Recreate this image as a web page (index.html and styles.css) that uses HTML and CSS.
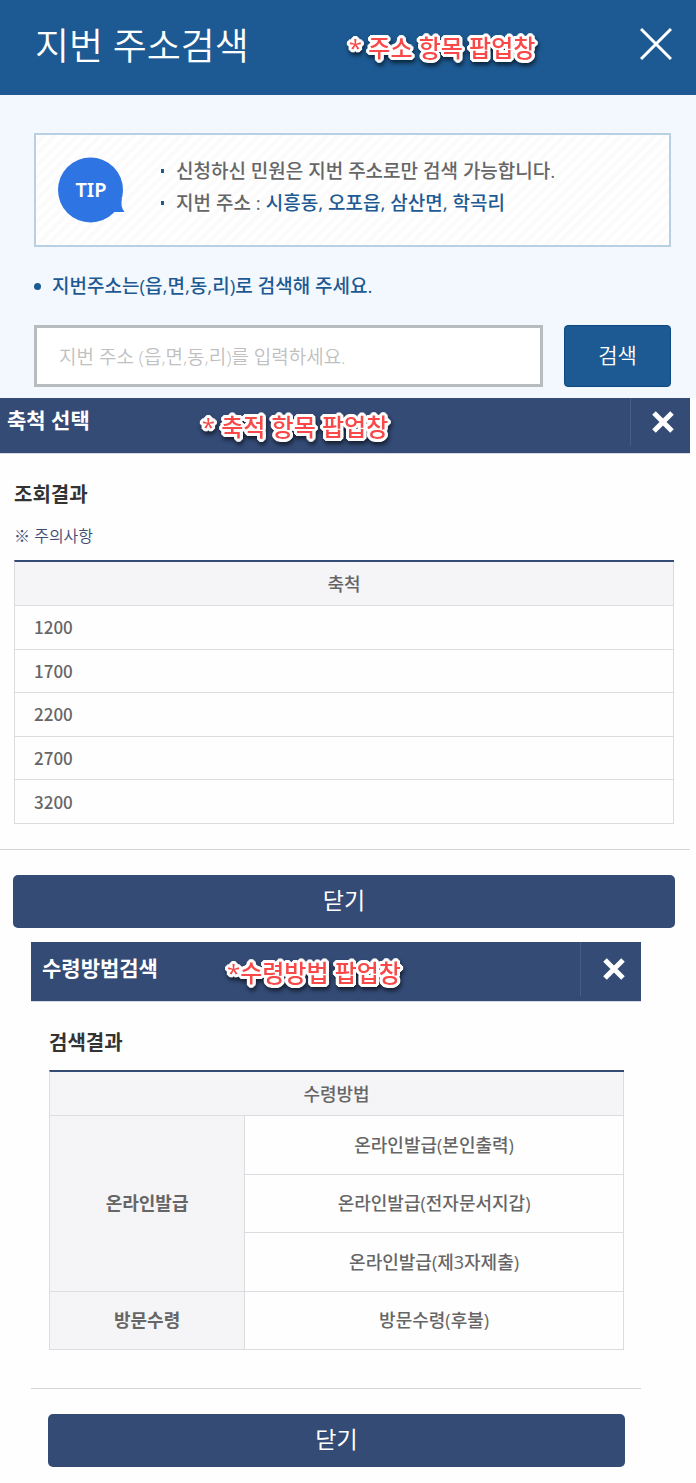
FILE: index.html
```html
<!DOCTYPE html>
<html lang="ko">
<head>
<meta charset="utf-8">
<meta name="viewport" content="width=device-width, initial-scale=1">
<title>지번 주소검색</title>
<link rel="stylesheet" href="styles.css">
</head>
<body>
<section class="address">
  <header class="address-head">
    <h1 class="address-title">지번 주소검색</h1>
    <span class="note">* 주소 항목 팝업창</span>
    <button class="close" type="button" aria-label="주소검색 닫기">
      <svg width="32" height="32" viewBox="0 0 32 32"><path d="M1 1L31 31M31 1L1 31" fill="none" stroke="currentColor" stroke-width="3"/></svg>
    </button>
  </header>
  <div class="address-body">
    <div class="tip">
      <svg class="tip-icon" width="67" height="66" viewBox="0 0 67 66" role="img" aria-label="TIP">
        <path d="M32.500 0.500A32.500 32.500 0 1 1 32.500 65.500A32.500 32.500 0 1 1 32.500 0.500Z" fill="#2f74e3"/>
        <path d="M64 42Q62 49 66.500 55L56 55L50 50Z" fill="#2f74e3"/>
        <text class="tip-label" x="33" y="40" text-anchor="middle">TIP</text>
      </svg>
      <ul class="tip-list">
        <li>신청하신 민원은 지번 주소로만 검색 가능합니다.</li>
        <li>지번 주소 : <b class="tip-strong">시흥동, 오포읍, 삼산면, 학곡리</b></li>
      </ul>
    </div>
    <form class="search">
      <label class="hint" for="addr">지번주소는(읍,면,동,리)로 검색해 주세요.</label>
      <div class="search-row">
        <input class="search-input" id="addr" type="text" placeholder="지번 주소 (읍,면,동,리)를 입력하세요.">
        <button class="search-button" type="button">검색</button>
      </div>
    </form>
  </div>
</section>

<section class="popup popup-scale">
  <header class="popup-head">
    <h2 class="popup-title">축척 선택</h2>
    <span class="note">* 축적 항목 팝업창</span>
    <button class="popup-close" type="button" aria-label="축척 선택 닫기">
      <svg width="24" height="24" viewBox="0 0 24 24"><path d="M3 3L21 21M21 3L3 21" fill="none" stroke="currentColor" stroke-width="5"/></svg>
    </button>
  </header>
  <div class="popup-body">
    <h3 class="result-title">조회결과</h3>
    <p class="caution">※ 주의사항</p>
    <table class="grid">
      <thead><tr><th scope="col">축척</th></tr></thead>
      <tbody class="numbers">
        <tr><td>1200</td></tr>
        <tr><td>1700</td></tr>
        <tr><td>2200</td></tr>
        <tr><td>2700</td></tr>
        <tr><td>3200</td></tr>
      </tbody>
    </table>
  </div>
  <footer class="popup-foot"><button class="confirm" type="button">닫기</button></footer>
</section>

<section class="popup popup-receive">
  <header class="popup-head">
    <h2 class="popup-title">수령방법검색</h2>
    <span class="note">*수령방법 팝업창</span>
    <button class="popup-close" type="button" aria-label="수령방법검색 닫기">
      <svg width="24" height="24" viewBox="0 0 24 24"><path d="M3 3L21 21M21 3L3 21" fill="none" stroke="currentColor" stroke-width="5"/></svg>
    </button>
  </header>
  <div class="popup-body">
    <h3 class="result-title">검색결과</h3>
    <table class="grid">
      <colgroup><col class="col-kind"><col></colgroup>
      <thead><tr><th scope="col" colspan="2">수령방법</th></tr></thead>
      <tbody class="methods">
        <tr><th scope="rowgroup" rowspan="3">온라인발급</th><td>온라인발급(본인출력)</td></tr>
        <tr><td>온라인발급(전자문서지갑)</td></tr>
        <tr><td>온라인발급(제3자제출)</td></tr>
        <tr><th scope="row">방문수령</th><td>방문수령(후불)</td></tr>
      </tbody>
    </table>
  </div>
  <footer class="popup-foot"><button class="confirm" type="button">닫기</button></footer>
</section>
</body>
</html>
```
FILE: styles.css
```css
* {
  box-sizing: border-box;
}

body {
  margin: 0;
  background: #fefefe;
  color: #666;
  font-family: "Open Sans", "Noto Sans CJK KR", sans-serif;
}

h1, h2, h3, p, ul {
  margin: 0;
  padding: 0;
}

button, input {
  font-family: inherit;
}

button {
  padding: 0;
  border: 0;
  color: #fff;
  cursor: pointer;
}

svg {
  display: block;
}

/* red captions with a white outline */
.note {
  padding-top: 2px;
  color: #f84848;
  font-size: 24px;
  font-weight: 500;
  line-height: 32px;
  white-space: nowrap;
  text-shadow:
    3px 0 #fff, -3px 0 #fff, 0 3px #fff, 0 -3px #fff,
    3px 1px #fff, 3px -1px #fff, -3px 1px #fff, -3px -1px #fff,
    1px 3px #fff, -1px 3px #fff, 1px -3px #fff, -1px -3px #fff,
    2px 2px #fff, -2px 2px #fff, 2px -2px #fff, -2px -2px #fff,
    1px 1px #fff, -1px 1px #fff, 1px -1px #fff, -1px -1px #fff;
  filter: drop-shadow(1px 3px 2px rgba(0, 0, 0, 0.6));
}

/* address search */
.address {
  background: #f3f8fe;
}

.address-head {
  display: flex;
  align-items: center;
  height: 95px;
  padding: 0 24px 2px 35px;
  background: #1d5a93;
}

.address-title {
  margin-right: 100px;
  padding-bottom: 2px;
  color: #fff;
  font-size: 37px;
  font-weight: 350;
  line-height: 48px;
  white-space: nowrap;
}

.close {
  margin-left: auto;
  padding-bottom: 5px;
  background: none;
}

.address-body {
  padding: 38px 25px 11px 34px;
}

.tip {
  display: flex;
  align-items: center;
  gap: 36px;
  height: 114px;
  padding: 0 22px;
  border: 2px solid #b9cfe2;
  background: repeating-linear-gradient(135deg, #fff 0 4px, #fbfbfc 4px 8px);
}

.tip-icon {
  flex: none;
}

.tip-label {
  fill: #fff;
  font-family: "Noto Sans", sans-serif;
  font-size: 20px;
  font-weight: 600;
}

.tip-list {
  padding-bottom: 6px;
  list-style: none;
  font-size: 19px;
  font-weight: 500;
  line-height: 32px;
}

.tip-list li {
  display: flex;
  align-items: center;
  white-space: pre;
}

.tip-list li::before {
  content: "";
  width: 3px;
  height: 4px;
  margin-right: 12px;
  background: #1d5a93;
}

.tip-strong {
  color: #1d5a93;
  font-weight: 500;
}

.hint {
  display: flex;
  align-items: center;
  gap: 11px;
  margin: 23px 0;
  color: #1d5a93;
  font-size: 19px;
  font-weight: 500;
  line-height: 32px;
}

.hint::before {
  content: "";
  width: 7px;
  height: 7px;
  border-radius: 50%;
  background: #1d5a93;
}

.search-row {
  display: flex;
  gap: 21px;
}

.search-input {
  flex: 1;
  min-width: 0;
  height: 62px;
  padding: 2px 22px 0;
  border: 3px solid #b8bcbf;
  background: #fff;
  color: #444;
  font-size: 19px;
}

.search-input::placeholder {
  color: #c0c0c0;
  font-weight: 350;
}

.search-button {
  width: 107px;
  height: 62px;
  padding-bottom: 4px;
  border: 1px solid #0d4880;
  border-radius: 4px;
  background: #1d5a93;
  font-size: 21px;
  font-weight: 350;
}

/* result popups */
.popup-scale {
  margin-right: 6px;
}

.popup-receive {
  margin: 14px 55px 0 31px;
}

.popup-head {
  display: flex;
  align-items: center;
  height: 56px;
  border-bottom: 1px solid #d5dae6;
  background: #344b76;
}

.popup-receive .popup-head {
  height: 60px;
}

.popup-title {
  padding-bottom: 12px;
  color: #fff;
  font-size: 21px;
  font-weight: 700;
  line-height: 32px;
  white-space: nowrap;
}

.popup-scale .popup-title {
  margin: 0 112px 0 7px;
}

.popup-receive .popup-title {
  margin: 0 69px 0 11px;
  padding-bottom: 8px;
}

.popup-close {
  display: grid;
  place-items: center;
  align-self: flex-start;
  width: 60px;
  height: 48px;
  margin-left: auto;
  padding-left: 5px;
  border-left: 1px solid #475e89;
  background: none;
}

.popup-receive .popup-close {
  width: 61px;
  height: 54px;
}

.popup-body {
  padding: 25px 16px 25px 14px;
}

.popup-receive .popup-body {
  padding: 25px 17px 38px 18px;
}

.result-title {
  color: #333;
  font-size: 20px;
  font-weight: 700;
  line-height: 32px;
}

.caution {
  margin: 13px 0 12px;
  color: #3f4d78;
  font-size: 16px;
  font-weight: 350;
  line-height: 24px;
}

.popup-receive .result-title {
  margin-bottom: 11px;
}

.grid {
  width: 100%;
  border-top: 2px solid #344b76;
  border-left: 1px solid #dcdcde;
  border-collapse: separate;
  border-spacing: 0;
  font-size: 18px;
  line-height: 24px;
}

.popup-scale .grid {
  height: 264px;
}

.popup-receive .grid {
  height: 280px;
}

.grid th, .grid td {
  height: 43px;
  padding: 0 19px;
  border-right: 1px solid #dcdcde;
  border-bottom: 1px solid #dcdcde;
  font-weight: 500;
  text-align: center;
}

.grid th {
  background: #f5f4f7;
}

.grid thead th {
  height: 44px;
}

.grid .numbers td {
  font-family: "Noto Sans CJK KR", sans-serif;
  font-size: 17px;
  text-align: left;
}

.col-kind {
  width: 34%;
}

.grid .methods th {
  font-weight: 700;
}

.grid .methods th, .grid .methods td {
  height: 58px;
}

.popup-foot {
  padding: 25px 15px 0 13px;
  border-top: 1px solid #d5d5d8;
}

.popup-receive .popup-foot {
  padding: 25px 16px 16px 17px;
}

.confirm {
  display: block;
  width: 100%;
  height: 53px;
  padding-bottom: 6px;
  border-radius: 5px;
  background: #344b76;
  font-size: 23px;
}
```
